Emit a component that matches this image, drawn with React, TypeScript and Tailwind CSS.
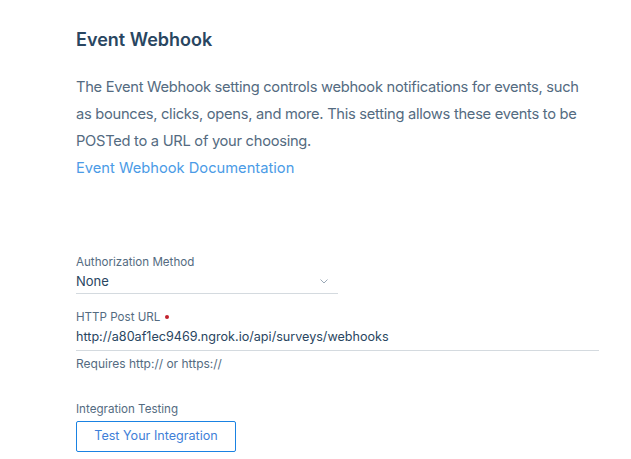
export default function App() {
  return (
    <div className="min-h-screen bg-white font-['Inter',sans-serif] text-[#546b81]">
      <div className="pl-[76px] pr-[32px] pt-[28px]">
        <h1 className="text-[18px] font-semibold leading-[24px] text-[#294661]">
          Event Webhook
        </h1>

        <p className="mt-[22px] max-w-[520px] text-[14.7px] leading-[27px] tracking-[-0.28px] text-[#546b81]">
          The Event Webhook setting controls webhook notifications for events,
          such as bounces, clicks, opens, and more. This setting allows these
          events to be POSTed to a URL of your choosing.
        </p>
        <a href="#" className="block text-[14.7px] leading-[27px] text-[#4b9be6]">
          Event Webhook Documentation
        </a>

        <div className="mt-[72px] w-[262px]">
          <label className="block text-[11.6px] leading-[16px] text-[#546b81]">
            Authorization Method
          </label>
          <div className="flex items-center justify-between border-b border-[#d4dadf] pb-[3px] pt-[2px]">
            <span className="text-[13px] leading-[18px] text-[#294661]">None</span>
            <svg width="8" height="5" viewBox="0 0 8 5" className="mr-[10px]">
              <path d="M0.5 0.5 L4 4 L7.5 0.5" fill="none" stroke="#9aa9b7" strokeWidth="1" />
            </svg>
          </div>
        </div>

        <div className="mt-[15px] w-[523px]">
          <label className="flex items-center text-[11.6px] leading-[16px] text-[#546b81]">
            HTTP Post URL
            <span className="ml-[5px] h-[4px] w-[4px] rounded-full bg-[#c2222d]" />
          </label>
          <div className="border-b border-[#d4dadf] pb-[4px] pt-[3px] text-[12.6px] leading-[18px] text-[#294661]">
            http://a80af1ec9469.ngrok.io/api/surveys/webhooks
          </div>
          <p className="mt-[5px] text-[12px] leading-[16px] text-[#546b81]">
            Requires http:// or https://
          </p>
        </div>

        <div className="mt-[29px]">
          <label className="block text-[11.6px] leading-[16px] text-[#546b81]">
            Integration Testing
          </label>
          <button className="mt-[4px] h-[31px] w-[160px] rounded-[2px] border border-[#1a82e2] bg-white text-[12.6px] text-[#3f7fd8]">
            Test Your Integration
          </button>
        </div>
      </div>
    </div>
  );
}
